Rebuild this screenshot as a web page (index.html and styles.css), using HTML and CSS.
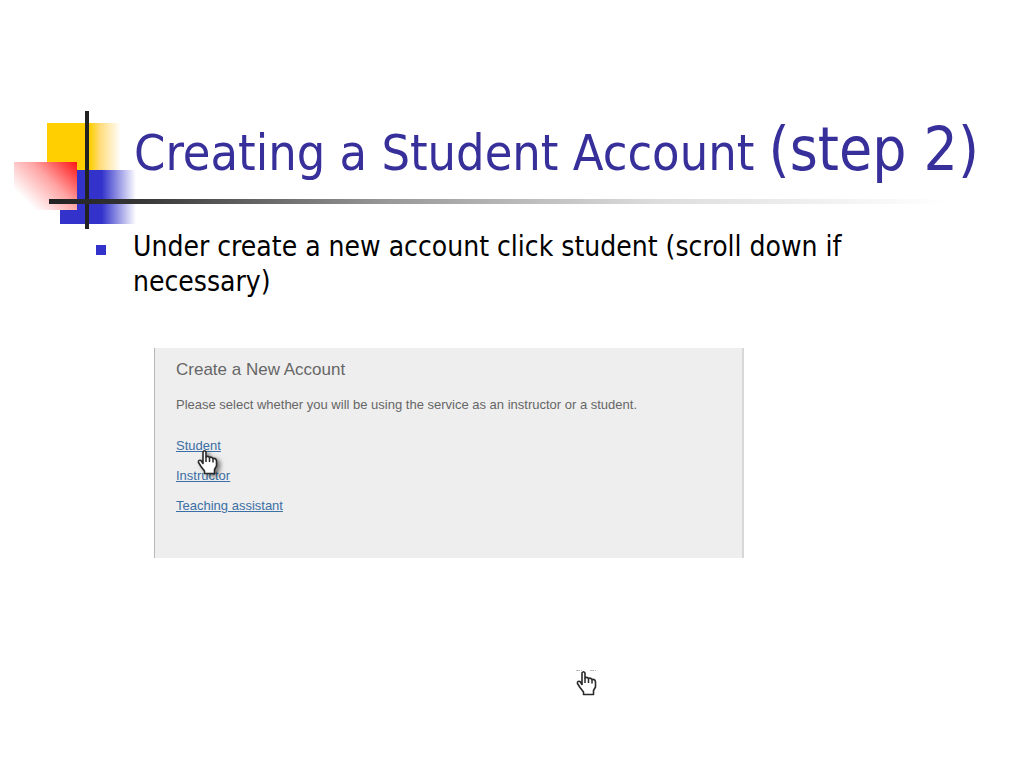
FILE: index.html
```
<!DOCTYPE html>
<html lang="en">
<head>
  <meta charset="UTF-8">
  <meta name="viewport" content="width=device-width, initial-scale=1.0">
  <title>Creating a Student Account (step 2)</title>
  <link rel="stylesheet" href="styles.css">
</head>
<body>
  <!-- hand pointer, used twice -->
  <svg class="symbols" aria-hidden="true">
    <symbol id="hand" viewBox="0 0 21 26">
      <path d="M6 3 Q7.500 0.500 9 3 V8 Q11 6.500 12.500 8.500 Q14.500 7.500 16 9.500 Q19 9 19.500 12 V17 L17.500 20.500 V24.500 H7.500 V22 L4 17.500 L1.500 13.500 Q1 10.500 4 11.500 L6 14.500 Z" fill="#fff" stroke="#2a2a2a" stroke-width="1.600" stroke-linejoin="round"/>
      <path d="M9 8 V13 M12.500 8.500 V13 M16 9.500 V13.500" fill="none" stroke="#2a2a2a" stroke-width="1.500"/>
    </symbol>
  </svg>

  <main class="slide">
    <header class="slide-header">
      <svg class="decoration" width="126" height="120" viewBox="0 0 126 120" aria-hidden="true">
        <defs>
          <linearGradient id="yellow">
            <stop offset="0.58" stop-color="#ffcf01"/>
            <stop offset="0.72" stop-color="#ffdc7c"/>
            <stop offset="1" stop-color="#fff"/>
          </linearGradient>
          <linearGradient id="blue">
            <stop offset="0.55" stop-color="#3333cc"/>
            <stop offset="1" stop-color="#fff"/>
          </linearGradient>
          <linearGradient id="red" x1="1" y1="0" x2="0.1" y2="0.7">
            <stop offset="0" stop-color="#ff1414"/>
            <stop offset="0.5" stop-color="#ffa4a4"/>
            <stop offset="1" stop-color="#fff"/>
          </linearGradient>
        </defs>
        <rect x="33" y="12" width="74" height="48" fill="url(#yellow)"/>
        <rect x="46" y="59" width="76" height="54" fill="url(#blue)"/>
        <rect x="0" y="51" width="63" height="48" fill="url(#red)"/>
        <rect x="71" y="0" width="4" height="118" fill="#222"/>
      </svg>
      <h1>Creating a Student Account <span class="step">(step 2)</span></h1>
      <div class="rule"></div>
    </header>

    <ul class="points">
      <li>Under create a new account click student (scroll down if necessary)</li>
    </ul>

    <section class="account-box">
      <h2>Create a New Account</h2>
      <p>Please select whether you will be using the service as an instructor or a student.</p>
      <ul class="roles">
        <li>
          <a href="#student">Student</a>
          <svg class="hand pointer" aria-hidden="true"><use href="#hand"/></svg>
        </li>
        <li><a href="#instructor">Instructor</a></li>
        <li><a href="#assistant">Teaching assistant</a></li>
      </ul>
    </section>

    <footer class="slide-footer">
      <svg class="hand" viewBox="0 0 21 26" aria-hidden="true">
        <path d="M0 0.500 H6 M14 0.500 H20" stroke="#bbb" stroke-dasharray="4 1"/>
        <use href="#hand" width="21" height="26"/>
      </svg>
    </footer>
  </main>
</body>
</html>
```
FILE: styles.css
```
* {
  margin: 0;
  padding: 0;
  box-sizing: border-box;
}

body {
  font-family: "DejaVu Sans Condensed", "DejaVu Sans", sans-serif;
  font-stretch: condensed;
  background: #fff;
  color: #000;
}

.symbols {
  position: absolute;
  width: 0;
  height: 0;
}

.slide {
  padding: 111px 14px 0;
}

.slide-header {
  position: relative;
  min-height: 118px;
}

/* coloured squares behind the title */
.decoration {
  position: absolute;
  top: 0;
  left: 0;
}

h1 {
  position: relative;
  padding-left: 120px;
  color: #38309a;
  font-size: 50px;
  font-weight: normal;
  line-height: 76px;
  white-space: nowrap;
}

.step {
  font-size: 60px;
}

.rule {
  position: relative;
  height: 5px;
  margin: 8px 64px 0 35px;
  background: linear-gradient(to right, #222 0%, #333 9%, #999 38%, #ddd 68%, #fff 100%);
}

.points {
  list-style: none;
  padding: 0 120px 0 82px;
}

.points li {
  display: flex;
  gap: 27px;
  font-size: 28px;
  line-height: 35px;
}

.points li::before {
  content: "";
  flex: none;
  width: 10px;
  height: 10px;
  margin-top: 16px;
  background: #3333cc;
}

.account-box {
  max-width: 590px;
  min-height: 210px;
  margin: 49px 0 0 140px;
  padding: 10px 21px;
  background: #eee;
  border-left: 1px solid #b8b8b8;
  border-right: 2px solid #d8d8d8;
  color: #666;
  font-family: "Liberation Sans", Arial, sans-serif;
  font-stretch: normal;
  font-size: 13px;
}

h2 {
  font-size: 17px;
  font-weight: normal;
  line-height: 24px;
}

.account-box p {
  margin-top: 13px;
  line-height: 20px;
}

.roles {
  list-style: none;
  margin-top: 16px;
}

.roles li {
  position: relative;
  line-height: 30px;
}

.roles a {
  color: #3c6fa5;
}

.hand {
  display: block;
  width: 21px;
  height: 26px;
}

.pointer {
  position: absolute;
  top: 18px;
  left: 21px;
  z-index: 1;
  filter: drop-shadow(3px 2px 2px rgba(0, 0, 0, 0.5));
}

.slide-footer {
  display: flex;
  justify-content: center;
  padding: 112px 0 0 148px;
}
```
